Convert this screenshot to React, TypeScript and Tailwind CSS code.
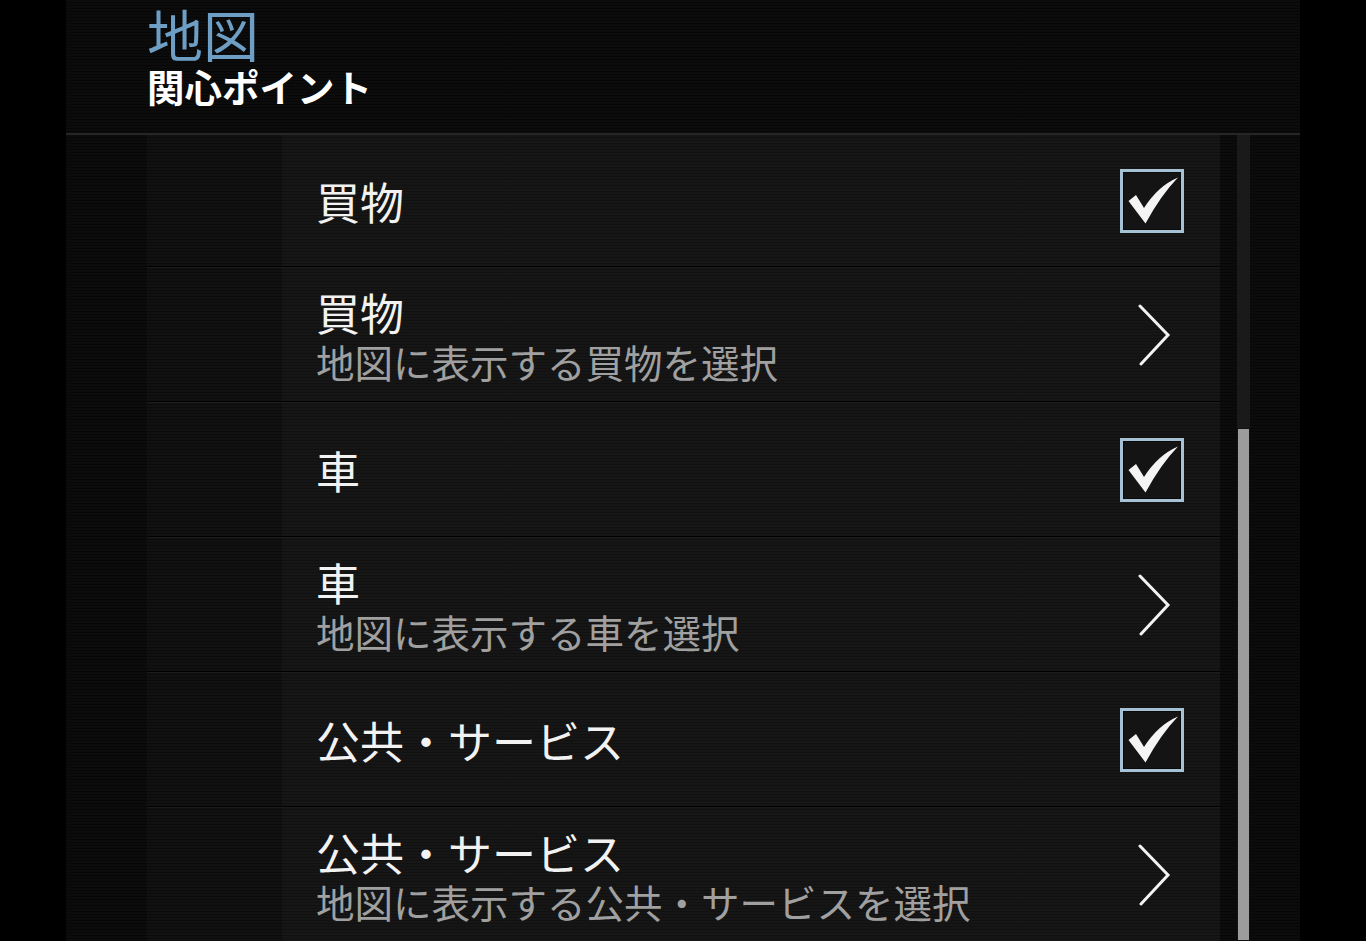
import React from 'react';

type Row = {
  title: string;
  subtitle?: string;
  kind: 'check' | 'nav';
};

const rows: Row[] = [
  { title: '買物', kind: 'check' },
  { title: '買物', subtitle: '地図に表示する買物を選択', kind: 'nav' },
  { title: '車', kind: 'check' },
  { title: '車', subtitle: '地図に表示する車を選択', kind: 'nav' },
  { title: '公共・サービス', kind: 'check' },
  { title: '公共・サービス', subtitle: '地図に表示する公共・サービスを選択', kind: 'nav' },
];

const FONT = "font-['Noto_Sans_CJK_JP','Noto_Sans',sans-serif]";

function CheckBox() {
  return (
    <svg width="66" height="66" viewBox="0 0 66 66">
      <rect x="1" y="1" width="64" height="64" fill="#a6c0d4" />
      <rect x="4" y="4" width="58" height="58" fill="#0a0a0a" />
      <rect x="5" y="5" width="56" height="56" fill="#141414" />
      <path d="M9.5 33 L17 27 L25 40 Q39 18 59 9.5 Q42 27 26.5 55.5 Z" fill="#f4f4f4" />
    </svg>
  );
}

function Chevron() {
  return (
    <svg width="66" height="62" viewBox="0 0 66 62">
      <polyline
        points="21,2 49,31 22,60"
        fill="none"
        stroke="#f2f2f2"
        strokeWidth="3"
        strokeLinecap="round"
        strokeLinejoin="miter"
      />
    </svg>
  );
}

function ListRow({ row, first }: { row: Row; first: boolean }) {
  return (
    <div className="flex flex-col">
      <div className={`flex ${first ? 'h-[131px]' : 'h-[133px]'}`}>
        <div className="w-[135px] bg-[rgba(255,255,255,0.022)]" />
        <div className="flex flex-1 items-center bg-[rgba(255,255,255,0.045)] pl-[34px] pr-[35px]">
          <div className="flex flex-1 flex-col">
            <div className="text-[44px] leading-[52px] text-[#f2f2f2]">{row.title}</div>
            {row.subtitle && (
              <div className="text-[38.5px] leading-[46px] text-[#a0a0a0]">{row.subtitle}</div>
            )}
          </div>
          {row.kind === 'check' ? <CheckBox /> : <Chevron />}
        </div>
      </div>
      <div className="h-[1px] bg-black" />
      <div className="h-[1px] bg-[#1c1c1c]" />
    </div>
  );
}

export default function App() {
  return (
    <div className={`h-[941px] w-full overflow-hidden bg-black ${FONT}`}>
      <div className="mx-auto flex h-full w-[1234px] flex-col bg-[#070707] bg-[image:repeating-linear-gradient(to_bottom,rgba(255,255,255,0.02)_0px,rgba(255,255,255,0.02)_2px,transparent_2px,transparent_3px)]">
        <div className="flex h-[133px] flex-col pl-[81px] pt-[1px]">
          <div className="text-[56px] leading-[64px] text-[#6f9ec4]">地図</div>
          <div className="-mt-[1px] text-[37.5px] font-bold leading-[44px] text-white">関心ポイント</div>
        </div>
        <div className="h-[2px] bg-[#262626]" />
        <div className="flex flex-1 overflow-hidden">
          <div className="w-[81px]" />
          <div className="flex w-[1073px] flex-col">
            {rows.map((row, i) => (
              <ListRow key={i} row={row} first={i === 0} />
            ))}
          </div>
          <div className="w-[17px]" />
          <div className="flex w-[13px] flex-col bg-[#1a1a1a]">
            <div className="h-[293px]" />
            <div className="flex-1 border border-[#111] bg-[#9c9c9c]" />
          </div>
        </div>
      </div>
    </div>
  );
}
